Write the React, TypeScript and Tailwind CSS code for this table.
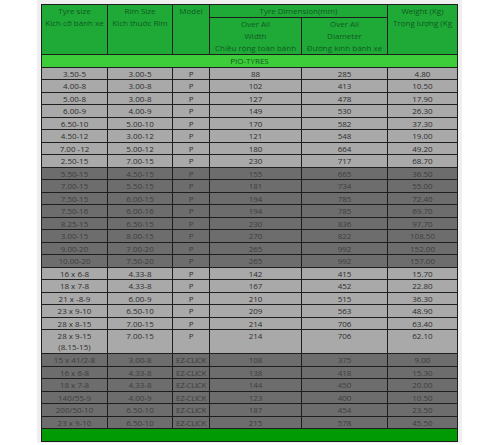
type Row = { size: string; size2?: string; rim: string; model: string; width: string; dia: string; weight: string };

const pioLight: Row[] = [
  { size: '3.50-5', rim: '3.00-5', model: 'P', width: '88', dia: '285', weight: '4.80' },
  { size: '4.00-8', rim: '3.00-8', model: 'P', width: '102', dia: '413', weight: '10.50' },
  { size: '5.00-8', rim: '3.00-8', model: 'P', width: '127', dia: '478', weight: '17.90' },
  { size: '6.00-9', rim: '4.00-9', model: 'P', width: '149', dia: '530', weight: '26.30' },
  { size: '6.50-10', rim: '5.00-10', model: 'P', width: '170', dia: '582', weight: '37.30' },
  { size: '4.50-12', rim: '3.00-12', model: 'P', width: '121', dia: '548', weight: '19.00' },
  { size: '7.00 -12', rim: '5.00-12', model: 'P', width: '180', dia: '664', weight: '49.20' },
  { size: '2.50-15', rim: '7.00-15', model: 'P', width: '230', dia: '717', weight: '68.70' },
];

const pioDark: Row[] = [
  { size: '5.50-15', rim: '4.50-15', model: 'P', width: '155', dia: '665', weight: '36.50' },
  { size: '7.00-15', rim: '5.50-15', model: 'P', width: '181', dia: '734', weight: '55.00' },
  { size: '7.50-15', rim: '6.00-15', model: 'P', width: '194', dia: '785', weight: '72.40' },
  { size: '7.50-16', rim: '6.00-16', model: 'P', width: '194', dia: '785', weight: '69.70' },
  { size: '8.25-15', rim: '6.50-15', model: 'P', width: '230', dia: '836', weight: '97.70' },
  { size: '3.00-15', rim: '8.00-15', model: 'P', width: '270', dia: '822', weight: '108.50' },
  { size: '9.00-20', rim: '7.00-20', model: 'P', width: '265', dia: '992', weight: '152.00' },
  { size: '10.00-20', rim: '7.50-20', model: 'P', width: '265', dia: '992', weight: '157.00' },
];

const smallLight: Row[] = [
  { size: '16 x 6-8', rim: '4.33-8', model: 'P', width: '142', dia: '415', weight: '15.70' },
  { size: '18 x 7-8', rim: '4.33-8', model: 'P', width: '167', dia: '452', weight: '22.80' },
  { size: '21 x -8-9', rim: '6.00-9', model: 'P', width: '210', dia: '515', weight: '36.30' },
  { size: '23 x 9-10', rim: '6.50-10', model: 'P', width: '209', dia: '563', weight: '48.90' },
  { size: '28 x 8-15', rim: '7.00-15', model: 'P', width: '214', dia: '706', weight: '63.40' },
  { size: '28 x 9-15', size2: '(8.15-15)', rim: '7.00-15', model: 'P', width: '214', dia: '706', weight: '62.10' },
];

const ezDark: Row[] = [
  { size: '15 x 41/2-8', rim: '3.00-8', model: 'EZ-CLICK', width: '108', dia: '375', weight: '9.00' },
  { size: '16 x 6-8', rim: '4.33-8', model: 'EZ-CLICK', width: '138', dia: '418', weight: '15.30' },
  { size: '18 x 7-8', rim: '4.33-8', model: 'EZ-CLICK', width: '144', dia: '450', weight: '20.00' },
  { size: '140/55-9', rim: '4.00-9', model: 'EZ-CLICK', width: '123', dia: '400', weight: '10.50' },
  { size: '200/50-10', rim: '6.50-10', model: 'EZ-CLICK', width: '187', dia: '454', weight: '23.50' },
  { size: '23 x 9-10', rim: '6.50-10', model: 'EZ-CLICK', width: '215', dia: '578', weight: '45.50' },
];

function DataRows({ rows, dark }: { rows: Row[]; dark?: boolean }) {
  const bg = dark ? 'bg-[#6d6d6d] text-[#3e3e3e]' : 'bg-[#a9a9a9] text-[#2e2e2e]';
  return (
    <>
      {rows.map((r, i) => {
        const tall = !!r.size2;
        const cell = 'border border-[#1e1e1e] p-0 align-top text-center leading-[11px] whitespace-nowrap';
        return (
          <tr key={i} className={`${bg} ${tall ? 'h-[24px]' : 'h-[12.5px]'}`}>
            <td className={cell}>
              {r.size}
              {r.size2 && <div>{r.size2}</div>}
            </td>
            <td className={cell}>{r.rim}</td>
            <td className={`${cell} tracking-[-0.4px]`}>{r.model}</td>
            <td className={cell}>{r.width}</td>
            <td className={cell}>{r.dia}</td>
            <td className={cell}>{r.weight}</td>
          </tr>
        );
      })}
    </>
  );
}

export default function App() {
  const head = 'border border-[#1e1e1e] p-0 align-top text-center leading-[12px] font-normal text-[#0f5a1e] whitespace-nowrap';
  return (
    <div className="w-[500px] h-[445px] bg-white">
      <div className="ml-[37px] w-[425px] h-[443px] bg-[#efefef] p-[4px]" style={{ fontFamily: '"Open Sans", "Noto Sans", sans-serif' }}>
        <table className="table-fixed border-collapse w-[416px] text-[8px]">
          <colgroup>
            <col className="w-[66px]" />
            <col className="w-[65px]" />
            <col className="w-[37px]" />
            <col className="w-[92px]" />
            <col className="w-[86px]" />
            <col className="w-[70px]" />
          </colgroup>
          <thead>
            <tr className="bg-[#1faa38] h-[12.5px]">
              <th rowSpan={2} className={head}>
                <div>Tyre size</div>
                <div>Kich cỡ bánh xe</div>
              </th>
              <th rowSpan={2} className={head}>
                <div>Rim Size</div>
                <div>Kich thuớc Rim</div>
              </th>
              <th rowSpan={2} className={head}>Model</th>
              <th colSpan={2} className={head}>Tyre Dimension(mm)</th>
              <th rowSpan={2} className={head}>
                <div>Weight (Kg)</div>
                <div>Trọng lượng (Kg</div>
              </th>
            </tr>
            <tr className="bg-[#1faa38] h-[36.5px]">
              <th className={head}>
                <div>Over All</div>
                <div>Width</div>
                <div>Chiều rộng toàn bánh</div>
              </th>
              <th className={head}>
                <div>Over All</div>
                <div>Diameter</div>
                <div>Đường kính bánh xe</div>
              </th>
            </tr>
          </thead>
          <tbody>
            <tr className="bg-[#3dcc3a] h-[12.5px]">
              <td colSpan={6} className="border border-[#1e1e1e] p-0 text-center leading-[11px] text-[#145a1e]">
                PIO-TYRES
              </td>
            </tr>
            <DataRows rows={pioLight} />
            <DataRows rows={pioDark} dark />
            <DataRows rows={smallLight} />
            <DataRows rows={ezDark} dark />
            <tr className="bg-[#019a05] h-[12.5px]">
              <td colSpan={6} className="border border-[#1e1e1e] p-0" />
            </tr>
          </tbody>
        </table>
      </div>
    </div>
  );
}
